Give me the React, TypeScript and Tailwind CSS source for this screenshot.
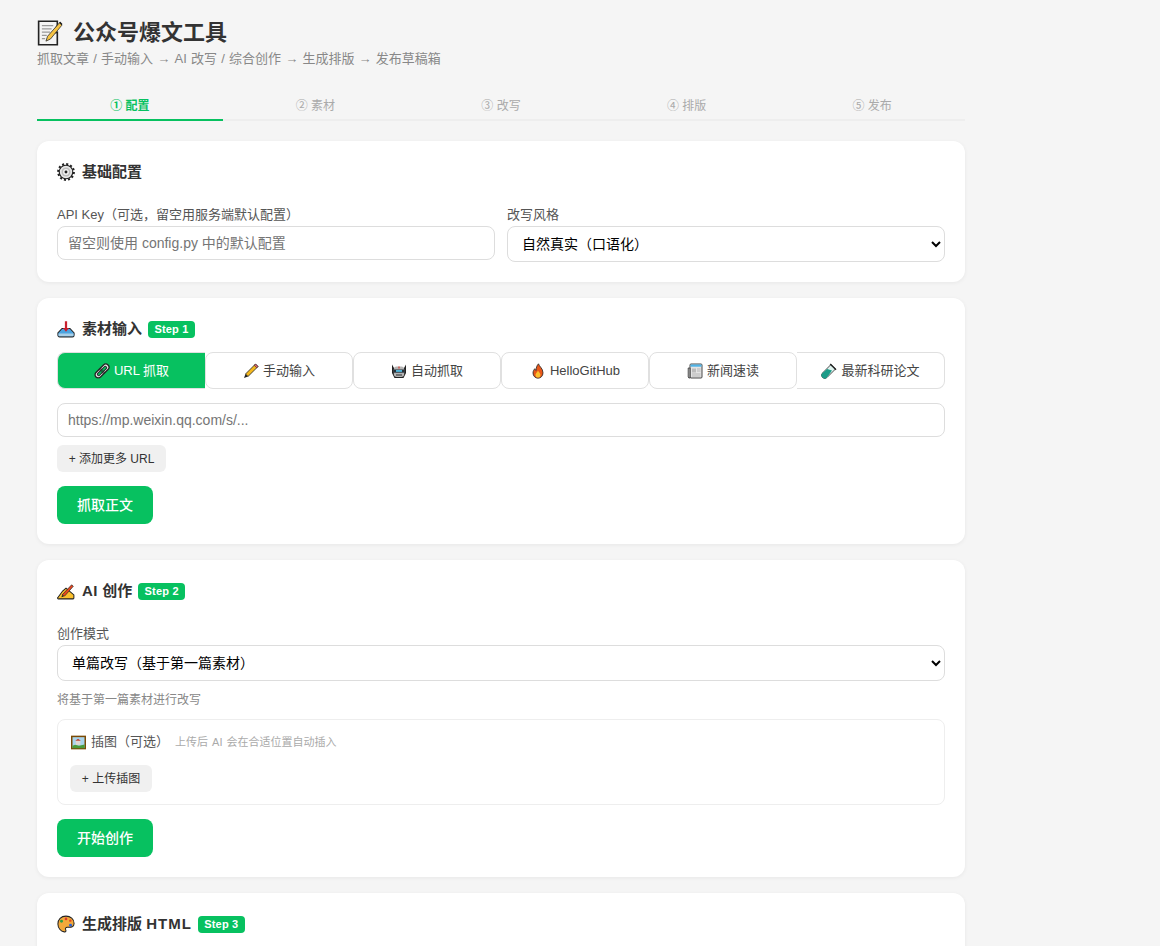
import React from "react";

const S = ({ size, children }: { size: number; children: React.ReactNode }) => (
  <svg width={size} height={size} viewBox="0 0 16 16" className="shrink-0">{children}</svg>
);

const Memo = ({ size = 26 }: { size?: number }) => (
  <S size={size}>
    <path d="M1 .8h11.500v2.500L10 8l2.500-.5V15.200H1z" fill="#f4f4f4" stroke="#222" strokeWidth="1" />
    <path d="M3 3.500h7M3 5.500h6M3 7.500h5M3 9.500h3M3 11.500h2" stroke="#999" strokeWidth=".7" />
    <path d="M14.300 1.200 6.500 10l-1 3 2.800-1.300 7-8.500z" fill="#f6c343" stroke="#333" strokeWidth=".5" />
    <path d="M13.600 1.800l1.500 1.400 .6-.8-1.400-1.300z" fill="#222" />
  </S>
);
const Gear = ({ size = 18 }: { size?: number }) => (
  <S size={size}>
    <circle cx="8" cy="8" r="6.900" fill="none" stroke="#222" strokeWidth="2" strokeDasharray="1.800 1.810" />
    <circle cx="8" cy="8" r="6" fill="#e8e8e8" stroke="#222" strokeWidth="1" />
    <circle cx="8" cy="8" r="4" fill="#bdbdbd" />
    <circle cx="8" cy="8" r="2.600" fill="#f2f2f2" />
    <circle cx="8" cy="8" r="1.300" fill="#222" />
  </S>
);
const Inbox = ({ size = 18 }: { size?: number }) => (
  <S size={size}>
    <path d="M.8 11.500 4.500 7.500h7l3.700 4v2a1.500 1.500 0 0 1-1.500 1.500H2.300A1.500 1.500 0 0 1 .8 13.500z" fill="#4aa3e0" stroke="#222" strokeWidth=".9" />
    <path d="M1.300 12h13.400v1.500a1 1 0 0 1-1 1H2.300a1 1 0 0 1-1-1z" fill="#a8cfe8" />
    <path d="M7 1h2v6h1.800L8 10.500 5.200 7H7z" fill="#c8202f" />
  </S>
);
const Writing = ({ size = 18 }: { size?: number }) => (
  <S size={size}>
    <path d="M.8 13.800 5 8l3-2.500 7 6v2.800a.7.7 0 0 1-.7.7H1.500a.7.7 0 0 1-.7-1.200z" fill="#fbc02d" stroke="#222" strokeWidth=".9" />
    <path d="M4.500 11.500 13 2.500l1.500 1.300L6.800 12.500z" fill="#e8451f" stroke="#222" strokeWidth=".6" />
    <path d="M4.500 11.500l-.6 2 2.300-.6z" fill="#222" />
  </S>
);
const Palette = ({ size = 18 }: { size?: number }) => (
  <S size={size}>
    <path d="M8 1C3.500 1 .8 4.200.8 8c0 3.600 2.500 6.500 5.700 7 1.600.2 1.700-1.100 1.200-2-.6-1.100.2-2.200 1.500-2.100 1.400.1 3 .3 4.300-.4 1.200-.7 1.700-2.100 1.700-3C15.200 3.500 12 1 8 1z" fill="#f2a93b" stroke="#222" strokeWidth=".9" />
    <circle cx="4" cy="5.500" r="1.300" fill="#2f9e44" />
    <circle cx="8" cy="3.500" r="1.200" fill="#d83a2e" />
    <circle cx="11.800" cy="5" r="1.100" fill="#e8451f" />
    <circle cx="12" cy="9" r="1.300" fill="#2a62d8" />
  </S>
);
const LinkIcon = () => (
  <S size={16}>
    <g transform="rotate(-45 8 8)">
      <rect x="-.5" y="4.800" width="17" height="6.400" rx="3.200" fill="#e8e8e8" stroke="#222" strokeWidth="1.300" />
      <rect x="2" y="6.700" width="12" height="2.600" rx="1.300" fill="#07c160" stroke="#222" strokeWidth="1" />
      <rect x="6.500" y="4.500" width="3" height="7" fill="#222" opacity=".55" />
    </g>
  </S>
);
const Pencil = () => (
  <S size={16}>
    <path d="M12.500 1 15 3.500 5 13.500 2.500 11z" fill="#f5b81c" stroke="#222" strokeWidth=".8" />
    <path d="M12.500 1 15 3.500l-1.300 1.300-2.500-2.500z" fill="#e8637a" stroke="#222" strokeWidth=".6" />
    <path d="M2.500 11 5 13.500 1 15z" fill="#222" />
  </S>
);
const Robot = () => (
  <S size={16}>
    <path d="M1 1.500 3 5h10l2-3.500V10l-2.500 5h-9L1 10z" fill="#222" />
    <rect x="2.800" y="3.500" width="10.400" height="10.500" rx="3" fill="#b5b5b5" />
    <rect x="2.800" y="6.500" width="10.400" height="3.200" fill="#27333d" />
    <rect x="5" y="7" width="6" height="1.900" fill="#4fb4d8" />
    <rect x="7.400" y="3.500" width="1.200" height="2" fill="#d83a2e" />
    <rect x="5" y="11.300" width="6" height="1.400" fill="#555" />
  </S>
);
const Fire = () => (
  <S size={16}>
    <path d="M8.500.8c.5 2.500 4.500 4.500 4.500 9 0 3.200-2.300 5.400-5 5.400S3 13 3 10c0-2 1-3.300 1.800-4.300.2 1 .7 1.600 1.300 1.800C6 5 6.800 2.500 8.500.8z" fill="#e8571a" stroke="#222" strokeWidth=".8" />
    <path d="M8 7.500c.4 1.500 2.500 2.500 2.500 4.500 0 1.600-1.100 2.600-2.500 2.600S5.500 13.600 5.500 12c0-1.800 1.800-2.800 2.500-4.500z" fill="#fbc02d" />
  </S>
);
const News = () => (
  <S size={16}>
    <rect x="3" y="1" width="12" height="14" rx="1" fill="#e4e4e4" stroke="#333" strokeWidth=".9" />
    <path d="M3 5H1.200v9a1.400 1.400 0 0 0 1.800 1z" fill="#bbb" stroke="#333" strokeWidth=".8" />
    <rect x="3.500" y="1.500" width="11" height="2.200" fill="#4fb4e8" />
    <rect x="5" y="5.500" width="4" height="4" fill="#bbb" />
    <path d="M10 6h3.500M10 8h3.500M5 11h8.500M5 13h8.500" stroke="#aaa" strokeWidth=".8" />
  </S>
);
const TestTube = () => (
  <S size={16}>
    <path d="M10 1.500 14.500 6 6 14.500a3 3 0 0 1-4.500-4.500z" fill="#dff3ef" stroke="#222" strokeWidth=".8" />
    <path d="M6.200 6 11 7.500 6 14.500a3 3 0 0 1-4.500-4.500z" fill="#1d9c89" />
    <path d="M9.200 1 15 6.800" stroke="#222" strokeWidth="1.400" />
  </S>
);
const Picture = () => (
  <S size={15}>
    <rect x=".8" y="1.500" width="14.400" height="13" fill="#a8d4ec" stroke="#7a4a05" strokeWidth="1.600" />
    <path d="M1.500 14v-2.500l3-1 4 1 6-1.500v4z" fill="#4a9b3a" />
    <rect x="5" y="6" width="5" height="4.500" fill="#e0d6d0" />
    <path d="M4.500 6 7.500 4l3 2z" fill="#c8402f" />
  </S>
);

const Badge = ({ n }: { n: number }) => (
  <span className="-ml-[1px] inline-flex h-[17px] w-[47px] items-center justify-center rounded-[4px] bg-[#07c160] text-[11px] font-bold leading-none tracking-[0.2px] text-white">
    Step {n}
  </span>
);

const Heading = ({ icon, title, step }: { icon: React.ReactNode; title: React.ReactNode; step?: number }) => (
  <div className="flex h-[20px] items-center gap-[7px] text-[15px] font-bold leading-[20px] text-[#333]">
    {icon}
    <span>{title}</span>
    {step ? <Badge n={step} /> : null}
  </div>
);

const Card = ({ className, children }: { className: string; children: React.ReactNode }) => (
  <section className={`rounded-[12px] bg-white px-[20px] shadow-[0_1px_4px_rgba(0,0,0,0.06)] ${className}`}>{children}</section>
);

const inputCls =
  "block h-[34px] w-full rounded-[8px] border border-[#ddd] bg-white px-[10px] text-[14px] text-[#333] outline-none placeholder:text-[#757575]";
const selectCls =
  "block h-[36px] w-full rounded-[8px] border border-[#ddd] bg-white px-[10px] text-[14px] text-black outline-none";

const steps = ["① 配置", "② 素材", "③ 改写", "④ 排版", "⑤ 发布"];
const tabs: { icon: React.ReactNode; label: string }[] = [
  { icon: <LinkIcon />, label: "URL 抓取" },
  { icon: <Pencil />, label: "手动输入" },
  { icon: <Robot />, label: "自动抓取" },
  { icon: <Fire />, label: "HelloGitHub" },
  { icon: <News />, label: "新闻速读" },
  { icon: <TestTube />, label: "最新科研论文" },
];

export default function App() {
  return (
    <div
      className="h-screen overflow-hidden bg-[#f5f5f5] pl-[37px] pt-[18px]"
      style={{ fontFamily: '"Liberation Sans", "Noto Sans CJK SC", sans-serif' }}
    >
      <div className="w-[928px]">
        <h1 className="flex h-[29px] items-center gap-[10px] text-[22px] font-bold leading-[29px] text-[#333]">
          <Memo />
          <span>公众号爆文工具</span>
        </h1>
        <p className="mt-[3px] h-[18px] text-[13px] leading-[18px] text-[#888] [word-spacing:0.6px]">
          抓取文章 / 手动输入 → AI 改写 / 综合创作 → 生成排版 → 发布草稿箱
        </p>

        <nav className="mt-[29px] flex border-b-2 border-[#eee]">
          {steps.map((s, i) => (
            <div
              key={s}
              className={`-mb-[2px] flex h-[24px] flex-1 items-start justify-center border-b-2 pt-[1px] text-[12px] leading-[16px] ${
                i === 0 ? "border-[#07c160] font-bold text-[#07c160]" : "border-transparent text-[#aaa]"
              }`}
            >
              {s}
            </div>
          ))}
        </nav>

        <Card className="mt-[20px] h-[141px] pt-[21px]">
          <Heading icon={<Gear />} title="基础配置" />
          <div className="mt-[24px] grid grid-cols-2 gap-[12px]">
            <div>
              <label className="block h-[20px] text-[13px] leading-[18px] text-[#555]">API Key（可选，留空用服务端默认配置）</label>
              <input className={inputCls} placeholder="留空则使用 config.py 中的默认配置" />
            </div>
            <div>
              <label className="block h-[20px] text-[13px] leading-[18px] text-[#555]">改写风格</label>
              <select className={selectCls} defaultValue="a">
                <option value="a">自然真实（口语化）</option>
              </select>
            </div>
          </div>
        </Card>

        <Card className="mt-[16px] h-[246px] pt-[21px]">
          <Heading icon={<Inbox />} title="素材输入" step={1} />
          <div className="mt-[13px] flex h-[37px]">
            {tabs.map((t, i) => (
              <div
                key={t.label}
                className={`flex w-[148px] items-center justify-center gap-[4px] rounded-[8px] border text-[13px] ${
                  i === 0
                    ? "rounded-r-none border-[#e0e0e0] border-r-0 bg-[#07c160] text-white"
                    : i === 5
                      ? "rounded-l-none border-[#e0e0e0] border-l-0 bg-white text-[#444]"
                      : "border-[#e0e0e0] bg-white text-[#444]"
                }`}
              >
                {t.icon}
                <span>{t.label}</span>
              </div>
            ))}
          </div>
          <input className={`${inputCls} mt-[14px]`} placeholder="https://mp.weixin.qq.com/s/..." />
          <button className="mt-[8px] block h-[27px] w-[109px] rounded-[6px] bg-[#f0f0f0] text-[12px] text-[#333]">+ 添加更多 URL</button>
          <button className="mt-[14px] block h-[38px] w-[96px] rounded-[8px] bg-[#07c160] text-[14px] font-medium text-white">抓取正文</button>
        </Card>

        <Card className="mt-[16px] h-[317px] pt-[21px]">
          <Heading icon={<Writing />} title={<><span className="tracking-[0.5px]">AI</span> 创作</>} step={2} />
          <label className="mt-[23px] block h-[20px] text-[13px] leading-[20px] text-[#555]">创作模式</label>
          <div className="mt-[1px]">
            <select className={selectCls} defaultValue="a">
              <option value="a">单篇改写（基于第一篇素材）</option>
            </select>
          </div>
          <p className="mt-[10px] h-[18px] text-[12px] leading-[18px] text-[#888]">将基于第一篇素材进行改写</p>
          <div className="mt-[10px] h-[86px] rounded-[8px] border border-[#eee] px-[12px] pt-[12px]">
            <div className="flex h-[20px] items-center">
              <span className="ml-[1px] mr-[5px]"><Picture /></span>
              <span className="text-[13px] text-[#555]">插图（可选）</span>
              <span className="ml-[6px] text-[11px] text-[#aaa] [word-spacing:1px]">上传后 AI 会在合适位置自动插入</span>
            </div>
            <button className="mt-[13px] block h-[27px] w-[82px] rounded-[6px] bg-[#f0f0f0] text-[12px] text-[#333]">+ 上传插图</button>
          </div>
          <button className="mt-[14px] block h-[38px] w-[96px] rounded-[8px] bg-[#07c160] text-[14px] font-medium text-white">开始创作</button>
        </Card>

        <Card className="mt-[16px] h-[200px] pt-[21px]">
          <Heading icon={<Palette />} title={<>生成排版 <span className="tracking-[1px]">HTML</span></>} step={3} />
        </Card>
      </div>
    </div>
  );
}
